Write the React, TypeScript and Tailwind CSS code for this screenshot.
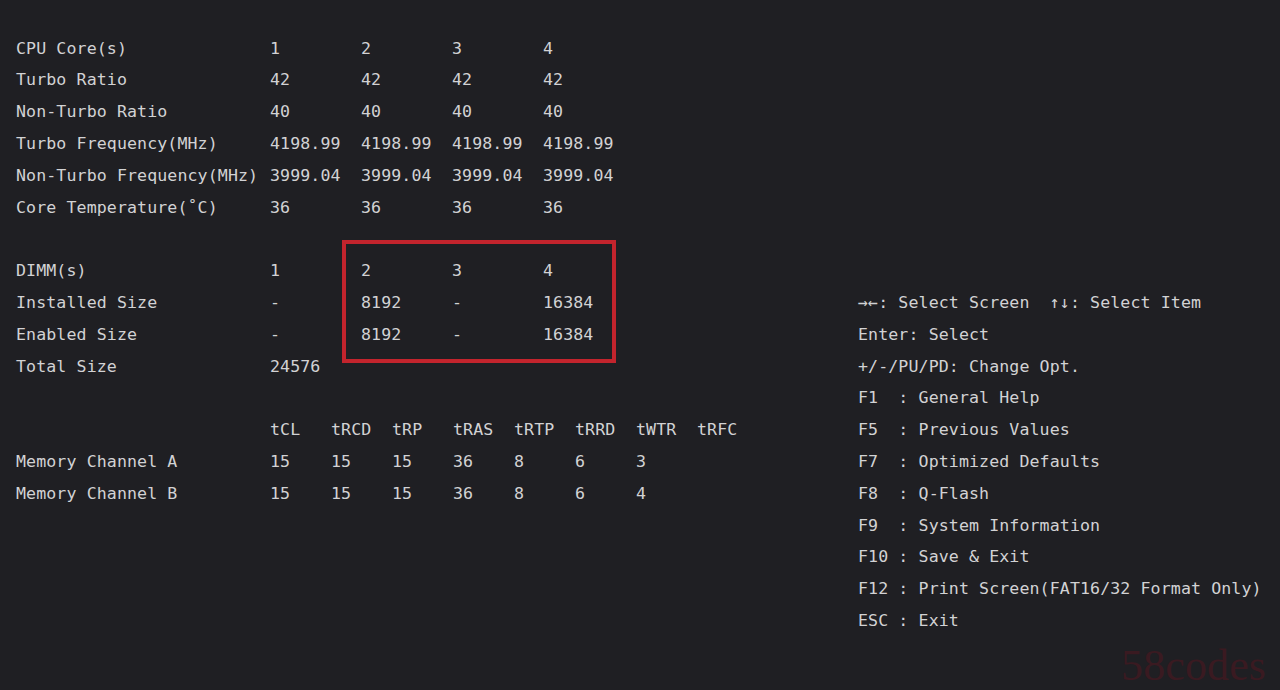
const cpuRows: [string, string[]][] = [
  ["CPU Core(s)", ["1", "2", "3", "4"]],
  ["Turbo Ratio", ["42", "42", "42", "42"]],
  ["Non-Turbo Ratio", ["40", "40", "40", "40"]],
  ["Turbo Frequency(MHz)", ["4198.99", "4198.99", "4198.99", "4198.99"]],
  ["Non-Turbo Frequency(MHz)", ["3999.04", "3999.04", "3999.04", "3999.04"]],
  ["Core Temperature(˚C)", ["36", "36", "36", "36"]],
];

const dimmRows: [string, string[]][] = [
  ["DIMM(s)", ["1", "2", "3", "4"]],
  ["Installed Size", ["-", "8192", "-", "16384"]],
  ["Enabled Size", ["-", "8192", "-", "16384"]],
  ["Total Size", ["24576"]],
];

const timingRows: [string, string[]][] = [
  ["", ["tCL", "tRCD", "tRP", "tRAS", "tRTP", "tRRD", "tWTR", "tRFC"]],
  ["Memory Channel A", ["15", "15", "15", "36", "8", "6", "3"]],
  ["Memory Channel B", ["15", "15", "15", "36", "8", "6", "4"]],
];

const helpLines = [
  "→←: Select Screen  ↑↓: Select Item",
  "Enter: Select",
  "+/-/PU/PD: Change Opt.",
  "F1  : General Help",
  "F5  : Previous Values",
  "F7  : Optimized Defaults",
  "F8  : Q-Flash",
  "F9  : System Information",
  "F10 : Save & Exit",
  "F12 : Print Screen(FAT16/32 Format Only)",
  "ESC : Exit",
];

const Row = ({ label, values, wide }: { label: string; values: string[]; wide?: boolean }) => (
  <div className="flex h-[31.8px] items-center whitespace-pre">
    <div className="w-[254px]">{label}</div>
    {values.map((v, i) => (
      <div key={i} className={wide ? "w-[91px]" : "w-[61px]"}>
        {v}
      </div>
    ))}
  </div>
);

const Spacer = () => <div className="h-[31.8px]" />;

export default function App() {
  return (
    <div
      className="relative w-[1280px] h-[690px] overflow-hidden bg-[#1f1f23] text-[#d2d2d4] text-[16.6px] leading-none tracking-[0.1px]"
      style={{ fontFamily: '"DejaVu Sans Mono", "Liberation Mono", monospace' }}
    >
      <div className="flex pt-[33px]">
        <div className="w-[842px] pl-4">
          {cpuRows.map(([l, v]) => (
            <Row key={l} label={l} values={v} wide />
          ))}
          <Spacer />
          <div className="relative">
            {dimmRows.map(([l, v]) => (
              <Row key={l} label={l} values={v} wide />
            ))}
            <div className="absolute left-[326px] top-[-16px] w-[274px] h-[123px] border-[4px] border-[#c3242d]" />
          </div>
          <Spacer />
          {timingRows.map(([l, v]) => (
            <Row key={l || "hdr"} label={l} values={v} />
          ))}
        </div>
        <div className="pt-[254.4px] pl-4">
          {helpLines.map((t) => (
            <div key={t} className="flex h-[31.8px] items-center whitespace-pre">
              {t}
            </div>
          ))}
        </div>
      </div>
      <div
        className="absolute right-[14px] bottom-[2px] text-[44px] leading-none text-[#3a1a21]"
        style={{ fontFamily: '"Liberation Serif", serif' }}
      >
        58codes
      </div>
    </div>
  );
}
